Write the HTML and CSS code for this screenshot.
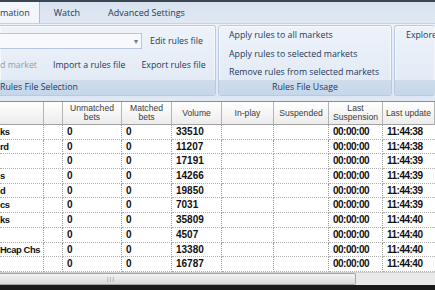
FILE: index.html
```html
<!DOCTYPE html>
<html lang="en">
<head>
  <meta charset="UTF-8">
  <title>Market Automation</title>
  <link rel="stylesheet" href="styles.css">
</head>
<body>
  <div class="window">
    <div class="tabs">
      <div class="tab active">mation</div>
      <div class="tab">Watch</div>
      <div class="tab">Advanced Settings</div>
    </div>

    <div class="ribbon">
      <div class="group group-files">
        <div class="group-body">
          <div class="ribbon-row">
            <div class="combo"><span class="combo-arrow">▾</span></div>
            <span class="ribbon-btn">Edit rules file</span>
          </div>
          <div class="ribbon-row row-two">
            <span class="ribbon-btn disabled">d market</span>
            <span class="ribbon-btn">Import a rules file</span>
            <span class="ribbon-btn">Export rules file</span>
          </div>
        </div>
        <div class="group-label label-left">Rules File Selection</div>
      </div>

      <div class="group group-usage">
        <div class="group-body stacked">
          <span class="ribbon-btn">Apply rules to all markets</span>
          <span class="ribbon-btn">Apply rules to selected markets</span>
          <span class="ribbon-btn">Remove rules from selected markets</span>
        </div>
        <div class="group-label">Rules File Usage</div>
      </div>

      <div class="group group-explore">
        <div class="group-body stacked">
          <span class="ribbon-btn">Explore</span>
        </div>
        <div class="group-label"></div>
      </div>
    </div>

    <div class="grid">
      <div class="grid-row grid-head">
        <div class="cell c-name"></div>
        <div class="cell c-blank"></div>
        <div class="cell c-unm">Unmatched<br>bets</div>
        <div class="cell c-mat">Matched<br>bets</div>
        <div class="cell c-vol">Volume</div>
        <div class="cell c-inp">In-play</div>
        <div class="cell c-sus">Suspended</div>
        <div class="cell c-lsus">Last<br>Suspension</div>
        <div class="cell c-upd">Last update</div>
      </div>
      <div id="rows"></div>
    </div>

    <div class="hscroll">
      <div class="thumb"><span class="grip">|||</span></div>
    </div>
    <div class="taskbar"></div>
  </div>

  <script>
    const markets = [
      ["ks", 33510, "11:44:38"],
      ["rd", 11207, "11:44:38"],
      ["", 17191, "11:44:39"],
      ["s", 14266, "11:44:39"],
      ["d", 19850, "11:44:39"],
      ["cs", 7031, "11:44:39"],
      ["ks", 35809, "11:44:40"],
      ["", 4507, "11:44:40"],
      ["Hcap Chs", 13380, "11:44:40"],
      ["", 16787, "11:44:40"]
    ];

    const rowsEl = document.getElementById("rows");

    markets.forEach(m => {
      const row = document.createElement("div");
      row.className = "grid-row";
      row.innerHTML =
        '<div class="cell c-name">' + m[0] + '</div>' +
        '<div class="cell c-blank"></div>' +
        '<div class="cell c-unm">0</div>' +
        '<div class="cell c-mat">0</div>' +
        '<div class="cell c-vol">' + m[1] + '</div>' +
        '<div class="cell c-inp"></div>' +
        '<div class="cell c-sus"></div>' +
        '<div class="cell c-lsus time">00:00:00</div>' +
        '<div class="cell c-upd time">' + m[2] + '</div>';
      rowsEl.appendChild(row);
    });
  </script>
</body>
</html>
```

FILE: styles.css
```css
* {
  margin: 0;
  padding: 0;
  box-sizing: border-box;
}

body {
  width: 435px;
  height: 290px;
  overflow: hidden;
  font-family: "Open Sans", "Noto Sans", sans-serif;
  background: #dfe8f3;
}

.window {
  display: flex;
  flex-direction: column;
  height: 290px;
}

/* Tab strip */
.tabs {
  display: flex;
  height: 23px;
  border-top: 2px solid #3b4654;
  background: linear-gradient(#d9e3ef, #dfe8f3);
  font-size: 9px;
  color: #1e395b;
  white-space: nowrap;
}

.tab {
  padding: 4px 14px 0 14px;
}

.tab.active {
  padding-left: 0;
  padding-right: 9px;
  background: #f2f6fb;
  border-right: 1px solid #aabdd4;
}

/* Ribbon */
.ribbon {
  display: flex;
  gap: 2px;
  height: 75px;
  padding: 1px 0 2px 0;
  background: linear-gradient(#edf2f9, #dde7f3);
  border-top: 1px solid #c3d2e5;
}

.group {
  display: flex;
  flex-direction: column;
  border: 1px solid #b9cadf;
  border-radius: 3px;
  background: linear-gradient(#eef3fa, #dfe8f4);
  box-shadow: inset 0 0 0 1px rgba(255, 255, 255, 0.6);
  overflow: hidden;
}

.group-files {
  width: 216px;
  border-left: none;
  border-radius: 0 3px 3px 0;
}

.group-usage {
  width: 174px;
}

.group-explore {
  flex: 1;
  border-right: none;
}

.group-body {
  flex: 1;
  min-height: 0;
  font-size: 8.8px;
  line-height: 12px;
  color: #1e395b;
  white-space: nowrap;
}

.ribbon-row {
  display: flex;
  align-items: center;
  gap: 8px;
  margin-top: 7px;
}

.row-two {
  margin-top: 10px;
  gap: 16px;
}

.combo {
  position: relative;
  width: 142px;
  height: 16px;
  background: #f7f9fc;
  border: 1px solid #b5c7de;
  border-left: none;
}

.combo-arrow {
  position: absolute;
  right: 3px;
  top: 1px;
  font-size: 8px;
  line-height: 12px;
  color: #6a7c92;
}

.disabled {
  color: #8f9db0;
}

.stacked {
  display: flex;
  flex-direction: column;
  gap: 6.5px;
  padding: 3px 0 0 10px;
}

.group-explore .stacked {
  padding-left: 11px;
}

.group-label {
  flex: none;
  height: 15px;
  background: linear-gradient(#cfdcec, #c6d6ea);
  font-size: 8.8px;
  color: #1e395b;
  text-align: center;
  line-height: 14px;
  white-space: nowrap;
}

.label-left {
  text-align: left;
}

/* Grid */
.grid {
  margin-top: 3px;
  background: #fff;
  border-top: 1px solid #8c8c8c;
  font-family: "Liberation Sans", Arial, sans-serif;
}

.grid-row {
  display: flex;
  height: 14.7px;
}

.grid-head {
  height: 23px;
  background: linear-gradient(#ffffff, #ececec);
  border-bottom: 1px solid #a3a3a3;
}

.cell {
  flex: none;
  overflow: hidden;
  white-space: nowrap;
  border-right: 1px dotted #9a9a9a;
  border-bottom: 1px dotted #b0b0b0;
  padding-left: 4px;
  font-size: 10px;
  font-weight: bold;
  line-height: 13px;
  color: #111;
}

.grid-head .cell {
  display: flex;
  align-items: center;
  justify-content: center;
  padding: 0;
  border-right: 1px solid #b5b5b5;
  border-bottom: none;
  font-size: 8.6px;
  font-weight: normal;
  line-height: 9px;
  color: #3c3c3c;
  text-align: center;
  white-space: normal;
}

.c-name {
  width: 44px;
  padding-left: 0;
  font-size: 9.4px;
  letter-spacing: -0.4px;
}
.c-blank { width: 19px; }
.c-unm { width: 59px; }
.c-mat { width: 50px; }
.c-vol { width: 50px; }
.c-inp { width: 52px; }
.c-sus { width: 55px; }
.c-lsus { width: 54px; }
.c-upd { flex: 1; border-right: none; }

.time {
  letter-spacing: -0.5px;
}

/* Scrollbar */
.hscroll {
  height: 13px;
  background: #e9e9e9;
  border-top: 1px solid #d0d0d0;
}

.thumb {
  width: 356px;
  height: 12px;
  background: linear-gradient(#f3f3f3, #dadada);
  border: 1px solid #a4a4a4;
  border-left: none;
  border-radius: 0 2px 2px 0;
  font-size: 6px;
  color: #777;
  line-height: 10px;
}

.grip {
  display: block;
  width: 10px;
  margin-left: 106px;
  letter-spacing: -0.5px;
}

.taskbar {
  flex: 1;
  background: #1a1a1a;
}
```
